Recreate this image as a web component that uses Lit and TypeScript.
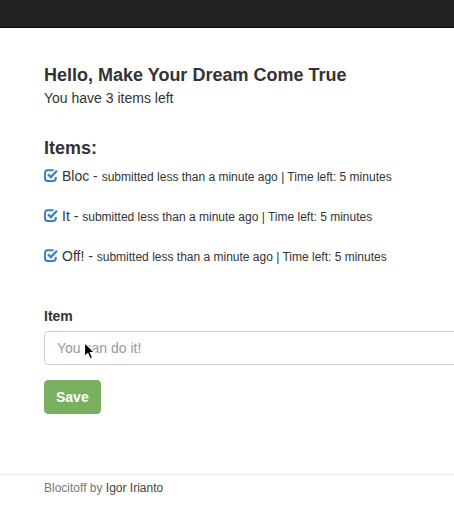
import { LitElement, html, css } from "lit";
import { customElement, state } from "lit/decorators.js";

interface Item {
  name: string;
  submitted: string;
  left: string;
}

@customElement("app-root")
export class AppRoot extends LitElement {
  static styles = css`
    :host {
      display: block;
      overflow: hidden;
      background: #fff;
      color: #333;
      font-family: "Helvetica Neue", Helvetica, "Liberation Sans", Arial, sans-serif;
      font-size: 14px;
      line-height: 20px;
    }
    * {
      box-sizing: border-box;
    }
    nav {
      height: 28px;
      background: #222;
      border-bottom: 1px solid #080808;
    }
    main {
      padding: 37px 0 60px 44px;
    }
    h1,
    h2 {
      margin: 0;
      font-size: 18px;
      line-height: 20px;
      font-weight: bold;
    }
    h1 {
      margin-bottom: 3px;
    }
    p {
      margin: 0;
    }
    h2 {
      margin: 30px 0 8px;
    }
    ul {
      list-style: none;
      margin: 0 0 40px;
      padding: 0;
      display: flex;
      flex-direction: column;
      gap: 20px;
    }
    li {
      display: flex;
      align-items: center;
      gap: 4px;
    }
    .check {
      border: 0;
      padding: 0;
      background: none;
      color: #3f80bd;
      cursor: pointer;
      display: flex;
    }
    small {
      font-size: 12px;
      line-height: 12px;
    }
    label {
      display: block;
      font-weight: bold;
      margin-bottom: 5px;
    }
    .field {
      position: relative;
      margin-right: -16px;
      margin-bottom: 15px;
    }
    input {
      display: block;
      width: 100%;
      height: 34px;
      padding: 6px 12px;
      border: 1px solid #ccc;
      border-radius: 4px;
      background: #fff;
      color: #555;
      font: inherit;
    }
    input::placeholder {
      color: #999;
      opacity: 1;
    }
    .pointer {
      position: absolute;
      left: 38px;
      top: 10px;
      pointer-events: none;
    }
    .save {
      display: block;
      height: 34px;
      padding: 6px 11px;
      border: 1px solid #78b05f;
      border-radius: 4px;
      background: #78b05f;
      color: #fff;
      font: inherit;
      font-weight: bold;
      cursor: pointer;
    }
    footer {
      border-top: 1px solid #e5e5e5;
      padding: 3px 0 32px 44px;
      font-size: 12px;
      color: #777;
    }
    footer a {
      color: #444;
      text-decoration: none;
    }
  `;

  @state() private items: Item[] = ["Bloc", "It", "Off!"].map((name) => ({
    name,
    submitted: "less than a minute ago",
    left: "5 minutes",
  }));

  private complete(item: Item) {
    this.items = this.items.filter((other) => other !== item);
  }

  private save(event: Event) {
    event.preventDefault();
    const input = this.renderRoot.querySelector("input")!;
    if (!input.value.trim()) return;
    this.items = [
      ...this.items,
      { name: input.value.trim(), submitted: "less than a minute ago", left: "5 minutes" },
    ];
    input.value = "";
  }

  render() {
    return html`
      <nav></nav>
      <main>
        <h1>Hello, Make Your Dream Come True</h1>
        <p>You have ${this.items.length} items left</p>
        <h2>Items:</h2>
        <ul>
          ${this.items.map(
            (item) => html`<li>
              <button class="check" aria-label="Complete ${item.name}" @click=${() => this.complete(item)}>
                <svg width="14" height="14" viewBox="0 0 14 14" fill="none" stroke="currentColor">
                  <path
                    d="M9.6 1.2H3.8Q1 1.2 1 4V9.2Q1 12 3.8 12H9Q11.8 12 11.8 9.2V8"
                    stroke-width="2"
                  />
                  <path d="M4 5.4L6.9 8.1L13 1.8" stroke-width="2.3" />
                </svg>
              </button>
              <span>${item.name} - <small>submitted ${item.submitted} | Time left: ${item.left}</small></span>
            </li>`
          )}
        </ul>
        <form @submit=${this.save}>
          <label for="item">Item</label>
          <div class="field">
            <input id="item" type="text" placeholder="You can do it!" autocomplete="off" />
            <svg class="pointer" width="14" height="20" viewBox="0 0 14 20" aria-hidden="true">
              <path
                d="M2.5 1.5V15.6L5.8 12.6L8 17.8L10.6 16.7L8.4 11.7H12.8Z"
                fill="#000"
                stroke="#fff"
                stroke-width="1.2"
              />
            </svg>
          </div>
          <button class="save" type="submit">Save</button>
        </form>
      </main>
      <footer>Blocitoff by <a href="#">Igor Irianto</a></footer>
    `;
  }
}
